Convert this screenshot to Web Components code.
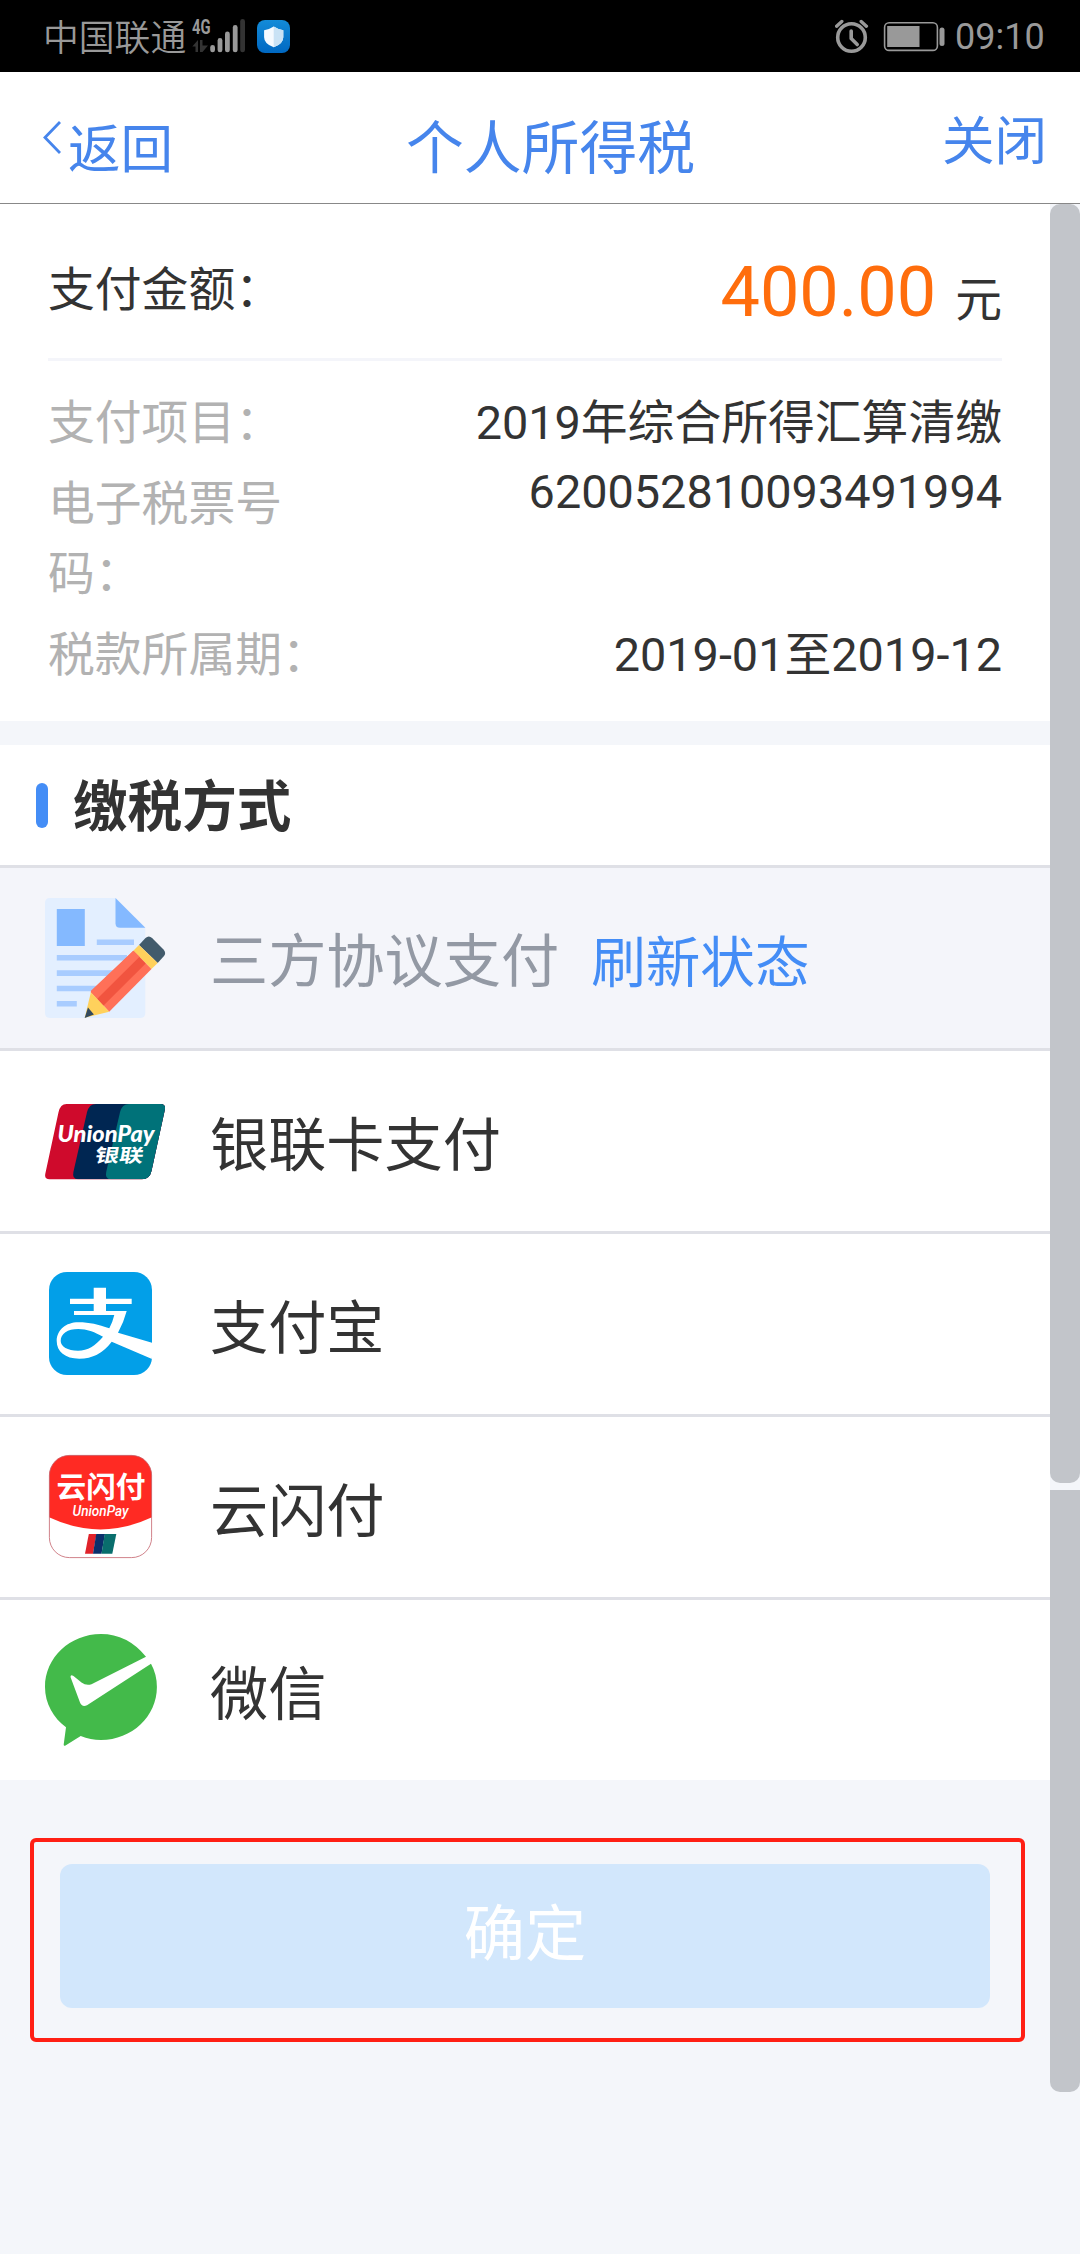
<!DOCTYPE html>
<html lang="zh-CN">
<head>
<meta charset="utf-8">
<title>个人所得税</title>
<style>
html,body{margin:0;padding:0}
body{width:1080px;height:2254px;overflow:hidden;background:#f4f6fa;color:#333;font-family:Roboto,"Noto Sans CJK SC",sans-serif}
</style>
</head>
<body>
<tax-app></tax-app>
<script>
const define = (name, html) => customElements.define(name, class extends HTMLElement {
  constructor() {
    super();
    const t = document.createElement('template');
    t.innerHTML = html;
    this.attachShadow({ mode: 'open' }).append(t.content.cloneNode(true));
  }
});

define('status-bar', `
<style>
:host{display:flex;height:72px;background:#000;color:#999;align-items:flex-start;box-sizing:border-box;padding:0 34px 0 43px}
.carrier{font:350 35.8px/72px "Noto Sans CJK SC",sans-serif;width:149px;white-space:nowrap;margin-top:-1px}
.time{font:400 36px/72px Roboto,sans-serif;margin-top:1px;white-space:nowrap;width:91px}
.sp{flex:1}
svg{display:block}
</style>
<span class="carrier">中国联通</span>
<svg width="100" height="72" viewBox="192 0 100 72">
<defs><linearGradient id="b" x1="0" y1="0" x2="0" y2="1"><stop offset="0" stop-color="#138bd8"/><stop offset="1" stop-color="#0068c2"/></linearGradient></defs>
<text x="192" y="34" font-family="Roboto,sans-serif" font-weight="700" font-size="20.5" textLength="18.5" lengthAdjust="spacingAndGlyphs" fill="#999">4G</text>
<path d="M192.3 46.5L198 40v12h-2.5v-5.5zM200 40h2.5v5.5h5.5L202.500 52H200z" fill="#333"/>
<g fill="#999"><rect x="210.200" y="45" width="4.800" height="7.300" rx="2.400"/><rect x="217.600" y="38" width="4.800" height="14.300" rx="2.400"/><rect x="225" y="31.500" width="4.800" height="20.800" rx="2.400"/><rect x="232.800" y="25" width="4.800" height="27.300" rx="2.400"/></g>
<rect x="240.200" y="19" width="4.800" height="33.300" rx="2.400" fill="#333"/>
<rect x="257" y="20" width="33" height="33" rx="8" fill="url(#b)"/>
<path d="M273.700 26.500q4.500 3 9.600 3.800v7q0 6.700-9.600 10-9.600-3.300-9.600-10v-7q5.100-.8 9.600-3.800z" fill="#f5faff"/>
<path d="M273.700 26.500q4.500 3 9.600 3.800v7q0 6.700-9.600 10z" fill="#c9e2f5"/>
</svg>
<span class="sp"></span>
<svg width="120" height="72" viewBox="835 0 120 72" fill="none" stroke="#999">
<circle cx="851.500" cy="37.500" r="13.800" stroke-width="3.600"/>
<path d="M851.200 31v7.500l6 6" stroke-width="3.600" stroke-linecap="round" stroke-linejoin="round"/>
<path d="M836.600 26.200l5.200-4.700M866.400 26.200l-5.200-4.700" stroke-width="3.400" stroke-linecap="round"/>
<rect x="884.600" y="22.800" width="52.800" height="27.600" rx="4.500" stroke-width="1.600"/>
<rect x="887.200" y="26" width="32.300" height="21" fill="#999" stroke="none"/>
<rect x="939.500" y="27.500" width="5" height="18.500" rx="2.500" fill="#999" stroke="none"/>
</svg>
<span class="time">09:10</span>`);

define('nav-bar', `
<style>
:host{display:flex;height:132px;box-sizing:border-box;background:#fff;border-bottom:1px solid #888;color:#4685ec;font-family:"Noto Sans CJK SC",sans-serif;font-weight:400;padding:0 33px 0 43px;white-space:nowrap}
.back{display:flex;width:363px;font-size:52.5px;line-height:60px;padding-top:43px}
.back svg{display:block;margin:6px 7px 0 0}
.title{font-size:57.8px;line-height:60px;padding-top:42px}
.close{flex:1;font-size:52.5px;line-height:60px;padding-top:35px;text-align:right}
</style>
<div class="back"><svg width="18" height="34" viewBox="0 0 18 34"><path d="M17 1L2 16.500L17 32" fill="none" stroke="#4685ec" stroke-width="2.800"/></svg><span>返回</span></div>
<div class="title">个人所得税</div>
<div class="close">关闭</div>`);

define('amount-row', `
<style>
:host{display:flex;justify-content:space-between;height:154px;border-bottom:3px solid #f4f5fa;font-size:46.8px;white-space:nowrap}
.l{line-height:70px;padding-top:51px}
.r{line-height:90px;padding-top:43px}
b{font-weight:400;font-size:70.2px;color:#ff6d0c;margin-right:19px}
</style>
<div class="l"><slot name="label"></slot></div><div class="r"><b><slot></slot></b><slot name="unit"></slot></div>`);

define('detail-row', `
<style>
:host{display:flex;justify-content:space-between;font-size:46.8px;line-height:70.2px;margin-bottom:10px}
.l{width:286px;color:#b2b2b2}
.r{white-space:nowrap;margin-top:var(--lift,0)}
</style>
<div class="l"><slot name="label"></slot></div><div class="r"><slot></slot></div>`);

define('section-title', `
<style>
:host{display:flex;align-items:center;height:120px;padding-left:36px;font:700 54.6px/80px "Noto Sans CJK SC",sans-serif}
i{width:12px;height:45px;border-radius:6px;background:#448df6;margin-right:25px}
span{margin-top:-5px}
</style>
<i></i><span><slot></slot></span>`);

define('pay-option', `
<style>
:host{display:flex;align-items:center;height:180px;border-top:3px solid #dfe0e6;padding-left:45px;background:#fff;font:400 58.2px/90px "Noto Sans CJK SC",sans-serif;white-space:nowrap}
:host([disabled]){background:#f4f5fa;color:#9399a4}
.i{width:120px;height:120px;margin-right:45px}
.t{display:flex;align-items:baseline}
.a{font-size:54.6px;color:#448df6;margin-left:32px}
</style>
<div class="i"><slot name="icon"></slot></div><div class="t"><span><slot></slot></span><span class="a"><slot name="action"></slot></span></div>`);

const icon = (name, body) => define(name, `<style>:host{display:block;width:120px;height:120px}svg{display:block;overflow:visible}</style><svg width="120" height="120" viewBox="0 0 120 120">${body}</svg>`);

icon('icon-agreement', `
<path d="M5 0H70.500L100.300 29.700V115q0 5-5 5H5q-5 0-5-5V5q0-5 5-5z" fill="#e3efff"/>
<path d="M70.500 0L100.300 29.700H75q-4.500 0-4.500-4.500z" fill="#84b9ff"/>
<rect x="11.800" y="11" width="28" height="37" fill="#84b9ff"/>
<path d="M51.800 41.500H89V47H51.800zM11.800 57H82v5.600H11.800zM11.800 72.300H68V78H11.800zM11.800 87.700H54v5.600H11.800zM11.800 103H31.800v5.500H11.800z" fill="#a8ccff"/>
<path d="M94 47l6.500-7q3.300-3 6.600 0L118.500 51.500q3 3.500 .5 6.500L112.700 65z" fill="#425b6c"/>
<path d="M94 47L88.300 52.700L106.500 71L112.700 65z" fill="#ffd15c"/>
<path d="M88.300 52.700L106.500 71L64.200 113.700L45.900 94.300V92.800z" fill="#ff7058"/>
<path d="M88.500 53L100.700 65.600L58.300 107.800L52 101z" fill="#f1543f"/>
<path d="M88.300 52.700L45.900 94.300L52 101L94.500 58.700z" fill="#ff7058"/>
<path d="M45.900 94.300L64.200 113.700L39.700 119.700z" fill="#ffd15c"/>
<path d="M43 109.500L48.900 116.500L39.700 119.900z" fill="#334a5e"/>`);

icon('icon-unionpay', `
<clipPath id="c"><path d="M21.500 23H115.500q5.500 0 4.400 5.500L106.500 90q-1.800 8.300-9.500 8.300H4.500Q-.8 98.300 .3 92.800L13.500 31.300Q15.300 23 21.500 23z"/></clipPath>
<g clip-path="url(#c)"><rect y="20" width="120" height="80" fill="#cf0a2c"/>
<path d="M51 23Q44 23 42 31.300L28.400 91q-1.500 7.300 4.600 7.300H120V23z" fill="#002652"/>
<path d="M84 23q-7 0-9 8.300L61.200 91q-1.500 7.300 4.600 7.300H120V23z" fill="#007279"/></g>
<text x="12.500" y="60.500" fill="#fff" font-family="Lato,sans-serif" font-weight="900" font-style="italic" font-size="23.500" textLength="97" lengthAdjust="spacingAndGlyphs">UnionPay</text>
<text transform="translate(49 81.300) skewX(-10)" fill="#fff" font-family="'Noto Sans CJK SC',sans-serif" font-weight="700" font-size="18.500" textLength="48.500" lengthAdjust="spacingAndGlyphs">银联</text>`);

icon('icon-alipay', `
<clipPath id="c"><rect x="4" y="8" width="103" height="103" rx="18"/></clipPath>
<g clip-path="url(#c)"><rect x="4" y="8" width="103" height="103" fill="#029fe8"/>
<path fill="#fff" fill-rule="evenodd" d="M48.700 23.700H61V34.700H86.700V40H61V47H81.700Q78.500 59 73 68.700L108 79V95.500L66.700 77.700Q54 94.700 34.300 94.700C20 94.700 11.700 87.500 11.700 77C11.700 66 21 58.300 33.300 58.300C45 58.300 53 60.500 64.300 64.300Q67.500 58.500 69.300 51H29V47H48.700V40H25V34.700H48.700zM58 72.700C49 67.800 42 65 33.300 65C22.500 65 15.700 69.500 15.700 77C15.700 82.500 22.500 86.700 33 86.700C43 86.700 50 82 58 72.700z"/></g>`);

icon('icon-quickpass', `
<clipPath id="c"><rect x="4.300" y="8.300" width="102.400" height="102.400" rx="20"/></clipPath>
<rect x="4.300" y="8.300" width="102.400" height="102.400" rx="20" fill="#fff"/>
<path clip-path="url(#c)" d="M4 8H107V70.300Q55.500 94.500 4 70.300z" fill="#ff2a23"/>
<rect x="4.400" y="8.400" width="102.200" height="102.200" rx="20" fill="none" stroke="#c4626c" stroke-width=".8"/>
<text x="11.500" y="50.500" fill="#fff" font-family="'Noto Sans CJK SC',sans-serif" font-weight="700" font-size="29" textLength="89" lengthAdjust="spacingAndGlyphs">云闪付</text>
<text x="27.500" y="69.300" fill="#fff" font-family="Roboto,sans-serif" font-style="italic" font-weight="500" font-size="15" textLength="56" lengthAdjust="spacingAndGlyphs">UnionPay</text>
<path d="M43.800 87H51.500L48 106.700H40z" fill="#e0222a"/><path d="M51.200 87H60L56.500 106.700H48z" fill="#0b2f6b"/><path d="M59.700 87H71.300L67.300 106.700H56.500z" fill="#096e6d"/>`);

icon('icon-wechat', `
<path fill="#43ba4a" d="M56 4C25 4 0 27.700 0 57C0 73.500 8.500 88 21 97.300L18.700 114.500Q18.700 116.500 20.500 115.500L35.700 106Q45.500 110 56 110C86.900 110 111.900 86.300 111.900 57Q111.900 44.500 106 33.800L42 75.300Q37 77.500 35 72.500L25.500 47Q25.500 44 28.500 46L36.500 52.500Q41 56 46.500 54.300L101 26.700Q82.500 4 56 4z"/>`);

define('confirm-button', `
<style>
:host{display:block;box-sizing:border-box;width:995px;height:204px;margin:58px 0 0 29.500px;border:4px solid #ff1f14;border-radius:6px;padding:22px 0 0 26.500px}
button{display:block;width:930px;height:144px;border:0;border-radius:12px;background:#d2e7fc;color:#fff;padding:0 0 13px;font:400 61.2px/131px "Noto Sans CJK SC",sans-serif}
</style>
<button disabled><slot></slot></button>`);

define('scroll-rail', `
<style>
:host{display:flex;flex-direction:column;gap:7px;width:30px}
i{display:block;background:#c2c5ca;border-radius:10px}
.a{height:1279px}
.b{height:602px;border-radius:0 0 10px 10px}
</style>
<i class="a"></i><i class="b"></i>`);

define('tax-app', `
<style>
:host{display:block;width:1080px;height:2254px;background:#f4f6fa}
.body{display:flex}
main{width:1050px}
.sum{box-sizing:border-box;height:517px;background:#fff;padding:0 48px}
.det{padding-top:27px}
.met{margin-top:24px;background:#fff}
</style>
<status-bar></status-bar>
<nav-bar></nav-bar>
<div class="body">
<main>
<section class="sum">
<amount-row><span slot="label">支付金额：</span>400.00<span slot="unit">元</span></amount-row>
<div class="det">
<detail-row style="margin-bottom:11px"><span slot="label">支付项目：</span>2019年综合所得汇算清缴</detail-row>
<detail-row style="--lift:-12px"><span slot="label">电子税票号码：</span>620052810093491994</detail-row>
<detail-row><span slot="label">税款所属期：</span>2019-01至2019-12</detail-row>
</div>
</section>
<section class="met">
<section-title>缴税方式</section-title>
<pay-option disabled><icon-agreement slot="icon"></icon-agreement>三方协议支付<span slot="action">刷新状态</span></pay-option>
<pay-option><icon-unionpay slot="icon"></icon-unionpay>银联卡支付</pay-option>
<pay-option><icon-alipay slot="icon"></icon-alipay>支付宝</pay-option>
<pay-option><icon-quickpass slot="icon"></icon-quickpass>云闪付</pay-option>
<pay-option><icon-wechat slot="icon"></icon-wechat>微信</pay-option>
</section>
<confirm-button>确定</confirm-button>
</main>
<scroll-rail></scroll-rail>
</div>`);
</script>
</body>
</html>
